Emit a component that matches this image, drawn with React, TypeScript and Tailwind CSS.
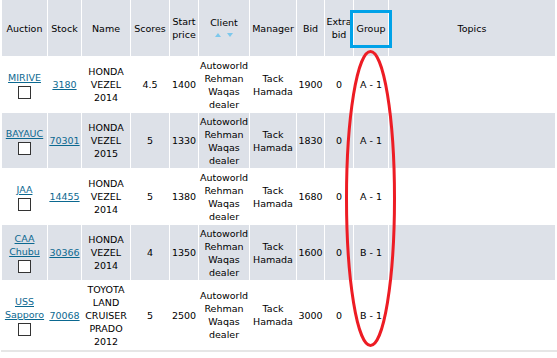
import React from "react";

type Row = {
  auction: string;
  stock: string;
  name: string;
  score: string;
  start: string;
  bid: string;
  group: string;
  height: string;
  gray: boolean;
};

const rows: Row[] = [
  { auction: "MIRIVE", stock: "3180", name: "HONDA VEZEL 2014", score: "4.5", start: "1400", bid: "1900", group: "A - 1", height: "h-[57px]", gray: false },
  { auction: "BAYAUC", stock: "70301", name: "HONDA VEZEL 2015", score: "5", start: "1330", bid: "1830", group: "A - 1", height: "h-[55px]", gray: true },
  { auction: "JAA", stock: "14455", name: "HONDA VEZEL 2014", score: "5", start: "1380", bid: "1680", group: "A - 1", height: "h-[57px]", gray: false },
  { auction: "CAA Chubu", stock: "30366", name: "HONDA VEZEL 2014", score: "4", start: "1350", bid: "1600", group: "B - 1", height: "h-[55px]", gray: true },
  { auction: "USS Sapporo", stock: "70068", name: "TOYOTA LAND CRUISER PRADO 2012", score: "5", start: "2500", bid: "3000", group: "B - 1", height: "h-[70px]", gray: false },
];

function SortArrows() {
  return (
    <div className="flex justify-center gap-[6px] mt-[4px]">
      <svg width="6" height="4" viewBox="0 0 6 4">
        <path d="M0 4 L3 0 L6 4 Z" fill="#7cc8ec" />
      </svg>
      <svg width="6" height="4" viewBox="0 0 6 4">
        <path d="M0 0 L6 0 L3 4 Z" fill="#7cc8ec" />
      </svg>
    </div>
  );
}

export default function App() {
  const th = "bg-[#dde1e8] font-normal text-center align-middle p-0";
  const td = "text-center align-middle p-0";

  return (
    <div className="relative w-[557px] h-[358px] bg-white overflow-hidden font-['DejaVu_Sans',sans-serif] text-[9.5px] leading-[13px] text-black">
      <div className="ml-[1px]">
        <table className="table-fixed w-[555px] border-separate border-spacing-x-[1px] border-spacing-y-0">
          <colgroup>
            <col className="w-[45px]" />
            <col className="w-[33px]" />
            <col className="w-[48px]" />
            <col className="w-[38px]" />
            <col className="w-[28px]" />
            <col className="w-[50px]" />
            <col className="w-[46px]" />
            <col className="w-[27px]" />
            <col className="w-[28px]" />
            <col className="w-[34px]" />
            <col className="w-[166px]" />
          </colgroup>
          <thead>
            <tr className="h-[56px]">
              <th className={th}>Auction</th>
              <th className={th}>Stock</th>
              <th className={th}>Name</th>
              <th className={th}>Scores</th>
              <th className={th}>
                Start
                <br />
                price
              </th>
              <th className={th}>
                <div className="-mt-[3px]">Client</div>
                <SortArrows />
              </th>
              <th className={th}>Manager</th>
              <th className={th}>Bid</th>
              <th className={`${th} overflow-hidden whitespace-nowrap`}>
                Extra
                <br />
                bid
              </th>
              <th className={th}>Group</th>
              <th className={th}>Topics</th>
            </tr>
          </thead>
          <tbody>
            {rows.map((r, i) => {
              const bg = r.gray ? "bg-[#dde1e8]" : "bg-white";
              return (
                <tr key={i} className={r.height}>
                  <td className={`${td} ${bg}`}>
                    <div className="flex flex-col items-center">
                      <a href="#" className="text-[#0b6890] underline">
                        {r.auction}
                      </a>
                      <span className="block w-[13px] h-[13px] border border-[#333] bg-white mt-[2px]" />
                    </div>
                  </td>
                  <td className={`${td} ${bg}`}>
                    <a href="#" className="text-[#0b6890] underline">
                      {r.stock}
                    </a>
                  </td>
                  <td className={`${td} ${bg}`}>{r.name}</td>
                  <td className={`${td} ${bg}`}>{r.score}</td>
                  <td className={`${td} ${bg}`}>{r.start}</td>
                  <td className={`${td} ${bg}`}>Autoworld Rehman Waqas dealer</td>
                  <td className={`${td} ${bg}`}>Tack Hamada</td>
                  <td className={`${td} ${bg}`}>{r.bid}</td>
                  <td className={`${td} ${bg}`}>0</td>
                  <td className={`${td} ${bg}`}>{r.group}</td>
                  <td className={`${td} ${bg}`}></td>
                </tr>
              );
            })}
          </tbody>
        </table>
        <div className="w-[557px] h-[2px] bg-[#e6e6e6]" />
      </div>

      {/* annotation: highlighted column */}
      <div className="absolute left-[350px] top-[10px] w-[42px] h-[38px] border-[3px] border-[#00a2e8]" />
      <svg className="absolute left-0 top-0" width="557" height="358" viewBox="0 0 557 358">
        <ellipse cx="370.5" cy="198.5" rx="24" ry="147" fill="none" stroke="#ed1c24" strokeWidth="3" />
      </svg>
    </div>
  );
}
